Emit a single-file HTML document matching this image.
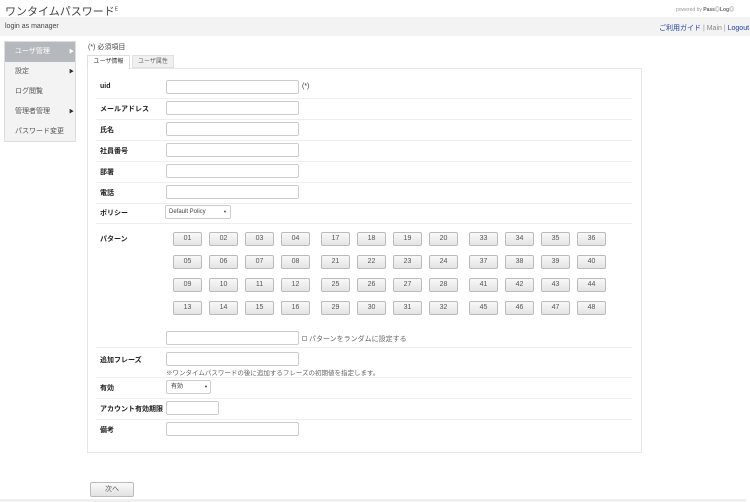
<!DOCTYPE html>
<html><head><meta charset="utf-8"><style>
*{box-sizing:border-box;margin:0;padding:0}
body{width:750px;height:502px;background:#fff;font-family:"Liberation Sans","Noto Sans CJK JP",sans-serif;font-size:7px;color:#333;position:relative;overflow:hidden}
.a{position:absolute}
.inp{position:absolute;left:166px;width:133px;height:14px;border:1px solid #ccc;border-radius:2px;background:#fff}
.lbl{position:absolute;left:100px;font-weight:bold;font-size:7px;color:#222}
.sep{position:absolute;left:96px;width:536px;height:1px;background:#eee}
.b{position:absolute;width:29px;height:14px;border:1px solid #bbb;border-radius:2px;background:linear-gradient(#f8f8f8,#e4e4e4);text-align:center;line-height:12px;font-size:7px;color:#555}
.side div{height:20px;line-height:20px;padding-left:10px;color:#555;position:relative}
.side .ar{position:absolute;left:64px;top:0;font-size:5px;color:#333}
</style></head><body>
<div class="a" style="left:5px;top:3px;font-size:11px;color:#444">ワンタイムパスワード<sup style="font-size:5px">E</sup></div>
<div class="a" style="left:676px;top:6px;font-size:5px;color:#999">powered by <b style="color:#666">Pass◎Log◎</b></div>
<div class="a" style="left:0;top:17px;width:750px;height:19px;background:#f3f3f3"></div>
<div class="a" style="left:5px;top:23px;font-size:7px;color:#444">login as manager</div>
<div class="a" style="left:659px;top:23px;font-size:7px;color:#999"><span style="color:#1a3fa0">ご利用ガイド</span> | <span style="color:#888">Main</span> | <span style="color:#1a3fa0">Logout</span></div>
<div class="a side" style="left:4px;top:41px;width:72px;height:101px;border:1px solid #ddd;background:#f3f3f3">
<div style="background:#b5b9bd;color:#fff">ユーザ管理<span class="ar" style="color:#fff">▶</span></div>
<div>設定<span class="ar">▶</span></div>
<div>ログ閲覧</div>
<div>管理者管理<span class="ar">▶</span></div>
<div>パスワード変更</div>
</div>
<div class="a" style="left:88px;top:42px;color:#444">(*) 必須項目</div>
<div class="a" style="left:87px;top:68px;width:555px;height:385px;border:1px solid #e6e6e6"></div>
<div class="a" style="left:87px;top:55px;width:43px;height:14px;border:1px solid #e0e0e0;border-bottom:none;background:#fff;text-align:center;line-height:13px;font-size:6px">ユーザ情報</div>
<div class="a" style="left:132px;top:55px;width:42px;height:13px;border:1px solid #e0e0e0;background:#f0f0f0;text-align:center;line-height:12px;font-size:6px;color:#666">ユーザ属性</div>

<div class="lbl" style="top:83px">uid</div><div class="inp" style="top:80px"></div><div class="a" style="left:302px;top:83px">(*)</div>
<div class="sep" style="top:98px"></div>
<div class="lbl" style="top:104px">メールアドレス</div><div class="inp" style="top:101px"></div>
<div class="sep" style="top:119px"></div>
<div class="lbl" style="top:125px">氏名</div><div class="inp" style="top:122px"></div>
<div class="sep" style="top:140px"></div>
<div class="lbl" style="top:146px">社員番号</div><div class="inp" style="top:143px"></div>
<div class="sep" style="top:161px"></div>
<div class="lbl" style="top:167px">部署</div><div class="inp" style="top:164px"></div>
<div class="sep" style="top:182px"></div>
<div class="lbl" style="top:188px">電話</div><div class="inp" style="top:185px"></div>
<div class="sep" style="top:203px"></div>
<div class="lbl" style="top:208px">ポリシー</div>
<div class="a" style="left:165px;top:205px;width:66px;height:14px;border:1px solid #ccc;border-radius:2px;font-size:6px;line-height:12px;padding-left:3px;color:#444">Default Policy<span style="position:absolute;left:57px;font-size:4px">▼</span></div>
<div class="sep" style="top:223px"></div>
<div class="lbl" style="top:234px">パターン</div>
<div id="btns"></div>
<script>
var h='';for(var g=0;g<3;g++)for(var r=0;r<4;r++)for(var c=0;c<4;c++){var n=g*16+r*4+c+1;var x=173+g*148+c*36;var y=232+r*23;h+='<div class="b" style="left:'+x+'px;top:'+y+'px">'+(n<10?'0'+n:n)+'</div>';}
document.getElementById('btns').innerHTML=h;
</script>
<div class="inp" style="top:331px"></div>
<div class="a" style="left:302px;top:334px;color:#666"><span style="display:inline-block;width:5px;height:5px;border:1px solid #aaa;margin-right:2px"></span>パターンをランダムに設定する</div>
<div class="sep" style="top:347px"></div>
<div class="lbl" style="top:355px">追加フレーズ</div><div class="inp" style="top:352px"></div>
<div class="a" style="left:166px;top:367px;color:#666;font-size:6.5px">※ワンタイムパスワードの後に追加するフレーズの初期値を指定します。</div>
<div class="sep" style="top:377px"></div>
<div class="lbl" style="top:383px">有効</div>
<div class="a" style="left:166px;top:380px;width:45px;height:14px;border:1px solid #ccc;border-radius:2px;font-size:6px;line-height:12px;padding-left:4px">有効<span style="position:absolute;left:37px;font-size:4px">▼</span></div>
<div class="sep" style="top:398px"></div>
<div class="lbl" style="top:404px">アカウント有効期限</div><div class="inp" style="top:401px;width:53px"></div>
<div class="sep" style="top:419px"></div>
<div class="lbl" style="top:425px">備考</div><div class="inp" style="top:422px"></div>
<div class="a" style="left:90px;top:482px;width:44px;height:15px;border:1px solid #bbb;border-radius:2px;background:linear-gradient(#fafafa,#e2e2e2);text-align:center;line-height:13px;color:#555">次へ</div>
<div class="a" style="left:0;top:499px;width:746px;height:3px;background:#f0f0f0"></div>
</body></html>
